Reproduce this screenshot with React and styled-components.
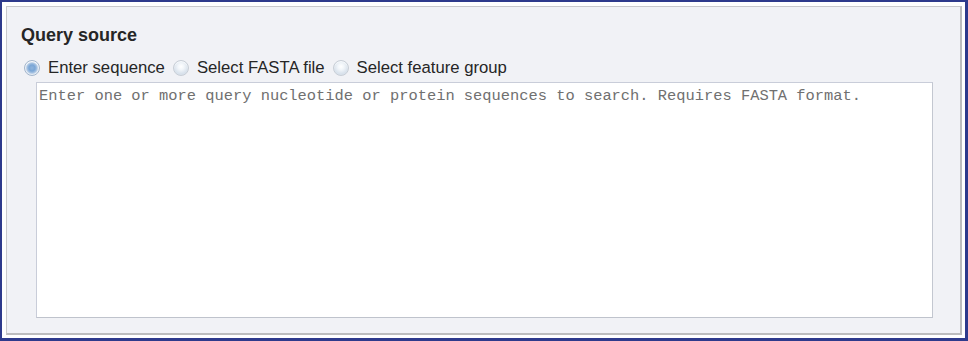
import React, { useState } from "react";
import styled, { createGlobalStyle } from "styled-components";

const GlobalStyle = createGlobalStyle`
  html, body {
    margin: 0;
    padding: 0;
    background: #ffffff;
  }
  body {
    font-family: "Liberation Sans", Arial, sans-serif;
  }
`;

const Frame = styled.div`
  box-sizing: border-box;
  width: 968px;
  height: 341px;
  border: 2px solid #2e3a8c;
  border-right-width: 3px;
  border-bottom-width: 3px;
  padding: 4px 3px 3px 4px;
  background: #ffffff;
  display: flex;
`;

const Panel = styled.section`
  box-sizing: border-box;
  flex: 1;
  display: flex;
  flex-direction: column;
  background: #f1f2f6;
  border-top: 1px solid #c9c9cc;
  border-left: 1px solid #c9c9cc;
  border-right: 2px solid #bcbcbe;
  border-bottom: 2px solid #bcbcbe;
  padding: 18px 27px 15px 14px;
`;

const Title = styled.h3`
  margin: 0;
  font-size: 18px;
  line-height: 20px;
  font-weight: bold;
  color: #262626;
`;

const RadioRow = styled.div`
  display: flex;
  align-items: center;
  margin: 13px 0 0 3px;
  height: 20px;
`;

const Option = styled.label`
  display: flex;
  align-items: center;
  gap: 8px;
  margin-right: 8px;
  font-size: 16.7px;
  color: #262626;
  cursor: pointer;
`;

const Radio = styled.span`
  box-sizing: border-box;
  width: 16px;
  height: 16px;
  border-radius: 50%;
  border: 1px solid ${({ $checked }) => ($checked ? "#a3b6cc" : "#c8ced6")};
  background: ${({ $checked }) =>
    $checked
      ? "radial-gradient(circle at 50% 50%, #8fb4dc 0, #7aa6d6 3px, #a9c4e2 5px, #e6edf5 6.5px)"
      : "radial-gradient(circle at 50% 40%, #ffffff 0, #f2f6fa 3px, #d9e2ec 7px)"};
  box-shadow: inset 0 1px 1px rgba(255, 255, 255, 0.8);
`;

const QueryBox = styled.textarea`
  box-sizing: border-box;
  margin: 4px 0 0 15px;
  flex: 1;
  resize: none;
  background: #ffffff;
  border: 1px solid #c9cdd9;
  border-bottom-color: #bfc3cc;
  border-right-color: #c3c7d0;
  padding: 4px 2px;
  font-family: "Liberation Mono", "Courier New", monospace;
  font-size: 15.4px;
  line-height: 18px;
  color: #333;
  outline: none;

  &::placeholder {
    color: #707070;
    opacity: 1;
  }
`;

const options = [
  { id: "seq", label: "Enter sequence" },
  { id: "file", label: "Select FASTA file" },
  { id: "group", label: "Select feature group" },
];

const App = () => {
  const [source, setSource] = useState("seq");

  return (
    <>
      <GlobalStyle />
      <Frame>
        <Panel>
          <Title>Query source</Title>
          <RadioRow>
            {options.map((opt) => (
              <Option key={opt.id} onClick={() => setSource(opt.id)}>
                <Radio $checked={source === opt.id} />
                {opt.label}
              </Option>
            ))}
          </RadioRow>
          <QueryBox placeholder="Enter one or more query nucleotide or protein sequences to search. Requires FASTA format." />
        </Panel>
      </Frame>
    </>
  );
};

export default App;
